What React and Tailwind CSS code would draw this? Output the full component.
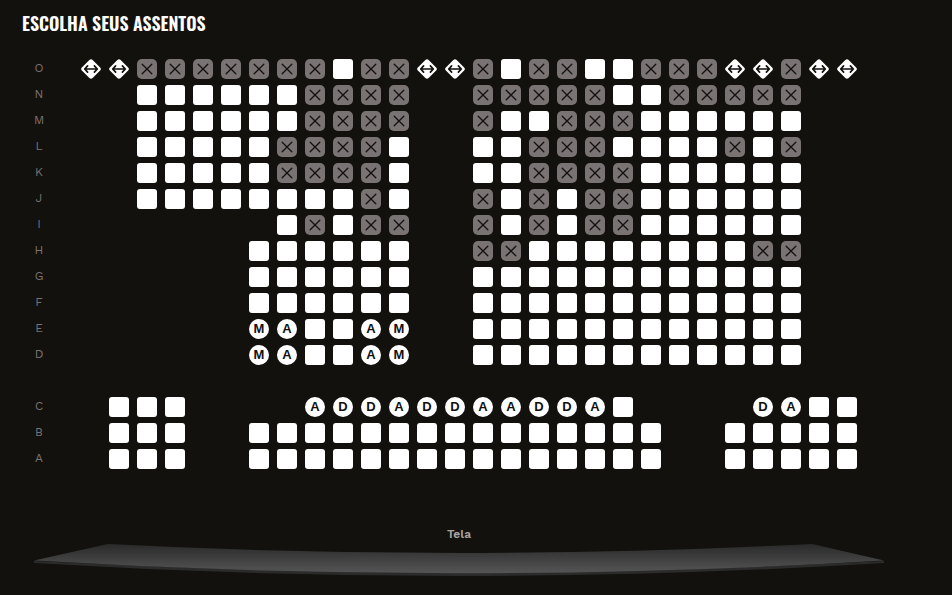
import React, { useState } from "react";

const SEAT_MAP = [
  ["O", "WWxxxxxxxoxxWWxoxxooxxxWWxWW"],
  ["N", "..ooooooxxxx..xxxxxooxxxxx.."],
  ["M", "..ooooooxxxx..xooxxxoooooo.."],
  ["L", "..oooooxxxxo..ooxxxooooxox.."],
  ["K", "..oooooxxxxo..ooxxxxoooooo.."],
  ["J", "..ooooooooxo..xoxoxxoooooo.."],
  ["I", ".......oxoxx..xoxoxxoooooo.."],
  ["H", "......oooooo..xxooooooooxx.."],
  ["G", "......oooooo..oooooooooooo.."],
  ["F", "......oooooo..oooooooooooo.."],
  ["E", "......MAooAM..oooooooooooo.."],
  ["D", "......MAooAM..oooooooooooo.."],
  ["", "............................"],
  ["C", ".ooo....ADDADDAADDAo....DAoo"],
  ["B", ".ooo..ooooooooooooooo..ooooo"],
  ["A", ".ooo..ooooooooooooooo..ooooo"],
];

const KIND_NAMES = {
  o: "livre",
  x: "ocupado",
  W: "espaçoso",
  M: "mobilidade reduzida",
  A: "acompanhante",
  D: "deficiente",
};

function SeatFace({ kind }) {
  if (kind === "x") {
    return (
      <span className="block size-5 rounded-[5px] bg-[#7a7373]">
        <svg viewBox="0 0 20 20" className="size-5" fill="none" stroke="#12110d" strokeWidth="1.3" strokeLinecap="round">
          <path d="M5.2 5.2 14.8 14.8M14.8 5.2 5.2 14.8" />
        </svg>
      </span>
    );
  }
  if (kind === "W") {
    return (
      <svg viewBox="0 0 20 20" className="size-5">
        <path
          d="M8.4 .9Q10-.6 11.6.9L19.1 8.4Q20.6 10 19.1 11.6L11.6 19.1Q10 20.6 8.4 19.1L.9 11.6Q-.6 10 .9 8.4Z"
          fill="#fff"
        />
        <path
          d="M4 10H16M6.6 6.9 3.7 10 6.6 13.1M13.4 6.9 16.3 10 13.4 13.1"
          fill="none"
          stroke="#12110d"
          strokeWidth="1.7"
          strokeLinecap="round"
          strokeLinejoin="round"
        />
      </svg>
    );
  }
  if (kind === "o") {
    return <span className="block size-5 rounded-[3px] bg-white" />;
  }
  return (
    <span className="flex size-5 items-center justify-center rounded-full bg-white font-['Liberation_Sans',sans-serif] text-[13px] leading-5 font-bold text-[#12110d]">
      {kind}
    </span>
  );
}

function Seat({ row, number, kind, selected, onToggle }) {
  if (kind === ".") return <span className="size-5 shrink-0" />;
  return (
    <button
      type="button"
      disabled={kind === "x"}
      aria-pressed={selected}
      aria-label={`Assento ${row}${number}, ${KIND_NAMES[kind]}`}
      onClick={onToggle}
      className="block size-5 shrink-0 cursor-pointer rounded-[3px] aria-pressed:opacity-60 disabled:cursor-not-allowed"
    >
      <SeatFace kind={kind} />
    </button>
  );
}

function Screen() {
  return (
    <svg viewBox="0 0 850 34" preserveAspectRatio="none" className="block h-[34px] w-full" role="img" aria-label="Tela">
      <defs>
        <linearGradient id="screen-surface" x1="0" y1="0" x2="0" y2="1">
          <stop offset="0" stopColor="#2a2a2a" />
          <stop offset="1" stopColor="#555555" />
        </linearGradient>
      </defs>
      <path d="M0 18Q425 40 850 18V20Q425 46 0 20Z" fill="#2b2b2b" />
      <path d="M0 17.5 74 1Q425 19 778 1L850 17.5Q425 43 0 17.5Z" fill="url(#screen-surface)" />
    </svg>
  );
}

export default function App() {
  const [selected, setSelected] = useState([]);
  const toggle = (id) =>
    setSelected((ids) => (ids.includes(id) ? ids.filter((other) => other !== id) : [...ids, id]));

  return (
    <main className="min-h-screen bg-[#12110d] pt-2 font-['Work_Sans','Inter',sans-serif]">
      <h1 className="px-[22px] font-['Oswald','Liberation_Sans_Narrow',sans-serif] text-lg leading-[30px] font-semibold text-white uppercase">
        Escolha seus assentos
      </h1>

      <section aria-label="Mapa de assentos" className="mt-[21px] flex flex-col gap-1.5 pl-[29px]">
        {SEAT_MAP.map(([row, seats], index) => (
          <div key={index} className="flex h-5 gap-2">
            <span className="mr-6 w-5 shrink-0 text-center text-xs leading-[18px] text-[#7a7373]">{row}</span>
            {[...seats].map((kind, column) => {
              const id = `${row}${column + 1}`;
              return (
                <Seat
                  key={id}
                  row={row}
                  number={column + 1}
                  kind={kind}
                  selected={selected.includes(id)}
                  onToggle={() => toggle(id)}
                />
              );
            })}
          </div>
        ))}
      </section>

      <section className="mt-14 pr-[68px] pl-[34px]">
        <p className="text-center text-xs leading-[18px] font-semibold text-[#a8a5a2]">Tela</p>
        <Screen />
      </section>
    </main>
  );
}
